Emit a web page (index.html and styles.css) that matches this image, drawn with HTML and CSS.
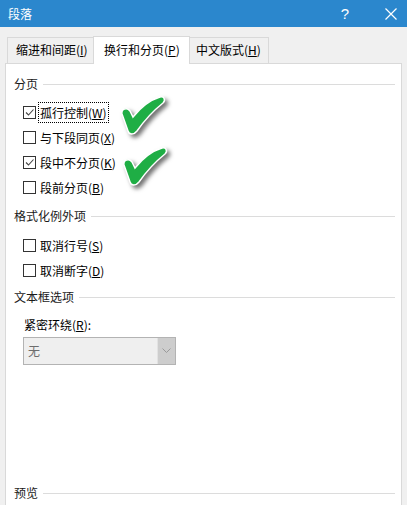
FILE: index.html
```html
<!DOCTYPE html>
<html lang="zh-CN">
<head>
<meta charset="utf-8">
<title>段落</title>
<link rel="stylesheet" href="styles.css">
</head>
<body>
<div class="dialog">
  <div class="titlebar">
    <span class="title">段落</span>
    <span class="help">?</span>
    <span class="close"><svg width="12" height="12" viewBox="0 0 12 12"><path d="M0.5 0.5 L11.5 11.5 M11.5 0.5 L0.5 11.5" stroke="#fff" stroke-width="1.2" fill="none"/></svg></span>
  </div>
  <div class="tabs">
    <div class="tab t1">缩进和间距(<u>I</u>)</div>
    <div class="tab active">换行和分页(<u>P</u>)</div>
    <div class="tab t3">中文版式(<u>H</u>)</div>
  </div>
  <div class="panel">
    <div class="group g1"><span>分页</span><i class="rule"></i></div>
    <div class="row"><span class="box checked"><svg width="11" height="11" viewBox="0 0 11 11"><path d="M2 5.5 L4.5 8 L9.5 2.5" stroke="#444" stroke-width="1.1" fill="none"/></svg></span><span class="lbl focus">孤行控制(<u>W</u>)</span></div>
    <div class="row"><span class="box"></span><span class="lbl">与下段同页(<u>X</u>)</span></div>
    <div class="row"><span class="box checked"><svg width="11" height="11" viewBox="0 0 11 11"><path d="M2 5.5 L4.5 8 L9.5 2.5" stroke="#444" stroke-width="1.1" fill="none"/></svg></span><span class="lbl">段中不分页(<u>K</u>)</span></div>
    <div class="row"><span class="box"></span><span class="lbl">段前分页(<u>B</u>)</span></div>

    <div class="group g2"><span>格式化例外项</span><i class="rule"></i></div>
    <div class="row r2"><span class="box"></span><span class="lbl">取消行号(<u>S</u>)</span></div>
    <div class="row"><span class="box"></span><span class="lbl">取消断字(<u>D</u>)</span></div>

    <div class="group g3"><span>文本框选项</span><i class="rule"></i></div>
    <div class="field-label">紧密环绕(<u>R</u>):</div>
    <div class="combo"><span class="combo-text">无</span><span class="combo-btn"><svg width="9" height="6" viewBox="0 0 9 6"><path d="M0.5 0.5 L4.5 4.5 L8.5 0.5" stroke="#9a9a9a" stroke-width="1" fill="none"/></svg></span></div>

    <div class="group g4"><span>预览</span><i class="rule"></i></div>

    <svg class="greencheck c1" width="50" height="46" viewBox="0 0 50 46"><path d="M3 19 C2 14 8 12 11 16 L14 22 C22 12 31 5 41 2 C45 1 47 5 44 8 C34 16 25 26 18 36 C15 40 10 40 9 36 Z" fill="#1fae45" stroke="#fff" stroke-width="1.5"/></svg>
    <svg class="greencheck c2" width="50" height="46" viewBox="0 0 50 46"><path d="M3 19 C2 14 8 12 11 16 L14 22 C22 12 31 5 41 2 C45 1 47 5 44 8 C34 16 25 26 18 36 C15 40 10 40 9 36 Z" fill="#1fae45" stroke="#fff" stroke-width="1.5"/></svg>
  </div>
</div>
</body>
</html>
```
FILE: styles.css
```css
html, body {
  margin: 0;
  padding: 0;
}
body {
  background: #f0f0f0;
  font-family: "Noto Sans CJK SC", "Noto Sans", sans-serif;
  font-size: 12px;
  color: #000;
  width: 407px;
  height: 505px;
  overflow: hidden;
}
u { text-decoration: underline; text-underline-offset: 1px; }

.dialog {
  display: flex;
  flex-direction: column;
  height: 505px;
}

.titlebar {
  height: 27px;
  background: #2b87cd;
  color: #fff;
  display: flex;
  align-items: center;
  flex: none;
}
.title {
  margin-left: 8px;
  font-size: 12px;
  line-height: 16px;
}
.help {
  margin-left: auto;
  font-family: "Liberation Sans", sans-serif;
  font-size: 15px;
  line-height: 16px;
  margin-right: 36px;
}
.close {
  display: flex;
  margin-right: 10px;
}

.tabs {
  height: 36px;
  display: flex;
  align-items: flex-end;
  padding-left: 7px;
  flex: none;
  position: relative;
  z-index: 2;
}
.tab {
  box-sizing: border-box;
  height: 26px;
  border: 1px solid #d9d9d9;
  border-bottom: none;
  background: #f0f0f0;
  display: flex;
  align-items: center;
  line-height: 16px;
  padding-bottom: 2px;
}
.t1 { width: 87px; padding-left: 8px; }
.active {
  width: 97px;
  height: 28px;
  margin-left: -1px;
  margin-bottom: -1px;
  background: #fff;
  padding-left: 10px;
  padding-bottom: 2px;
}
.t3 { width: 80px; margin-left: -1px; padding-left: 6px; }

.panel {
  position: relative;
  margin-left: 5px;
  width: 397px;
  box-sizing: border-box;
  border: 1px solid #d9d9d9;
  border-bottom: none;
  background: #fff;
  flex: 1;
  display: flex;
  flex-direction: column;
}

.group {
  display: flex;
  align-items: center;
  height: 16px;
  line-height: 16px;
  padding-left: 8px;
  padding-right: 6px;
  color: #1a1a1a;
}
.rule {
  flex: 1;
  height: 1px;
  background: #dcdcdc;
  margin-left: 5px;
}
.g1 { margin-top: 12px; margin-bottom: 8px; }
.g2 { margin-top: 8px; margin-bottom: 9px; }
.g3 { margin-top: 6px; }
.g4 { margin-top: 120px; }

.row {
  height: 25px;
  display: flex;
  align-items: center;
  padding-left: 17px;
}
.box {
  box-sizing: border-box;
  width: 13px;
  height: 13px;
  border: 1px solid #333;
  background: #fff;
  display: flex;
  align-items: center;
  justify-content: center;
  flex: none;
}
.lbl {
  margin-left: 2px;
  padding: 2px 1px 1px 1px;
  line-height: 16px;
  border: 1px dotted transparent;
}
.lbl.focus {
  border-color: #000;
}

.field-label {
  margin-top: 12px;
  padding-left: 18px;
  line-height: 16px;
  height: 16px;
}
.combo {
  margin-top: 4px;
  margin-left: 17px;
  width: 153px;
  height: 28px;
  box-sizing: border-box;
  border: 1px solid #b3b3b3;
  background: #efefef;
  display: flex;
}
.combo-text {
  flex: 1;
  padding-left: 4px;
  color: #6d6d6d;
  line-height: 26px;
}
.combo-btn {
  width: 17px;
  background: #cdcdcd;
  border-left: 1px solid #e2e2e2;
  display: flex;
  align-items: center;
  justify-content: center;
}

.greencheck {
  position: absolute;
  filter: drop-shadow(3px 3px 2px rgba(0,0,0,0.55));
}
.c1 { left: 113px; top: 31px; }
.c2 { left: 115px; top: 82px; }
```
